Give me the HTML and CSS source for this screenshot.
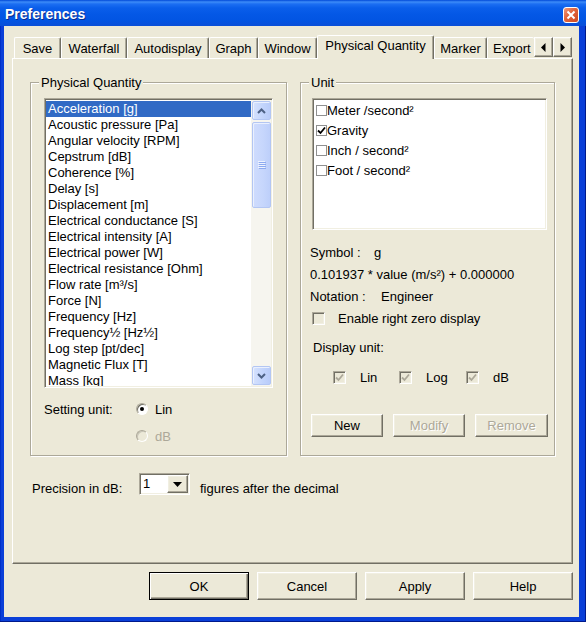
FILE: index.html
```html
<!DOCTYPE html>
<html>
<head>
<meta charset="utf-8">
<title>Preferences</title>
<link rel="stylesheet" href="styles.css">
</head>
<body>
<div class="window">
  <div class="titlebar">
    <span class="title">Preferences</span>
    <span class="close"><svg width="10" height="10" viewBox="0 0 10 10"><path d="M1.5 1.5L8.5 8.5M8.5 1.5L1.5 8.5" stroke="#fff" stroke-width="2"/></svg></span>
  </div>
  <div class="client">
    <div class="tabrow">
      <div class="tabs">
        <div class="tab">Save</div>
        <div class="tab">Waterfall</div>
        <div class="tab">Autodisplay</div>
        <div class="tab">Graph</div>
        <div class="tab">Window</div>
        <div class="tab active">Physical Quantity</div>
        <div class="tab">Marker</div>
        <div class="tab">Export</div>
      </div>
      <div class="tab-scroll">
        <span class="cbtn arrow-btn"><svg width="5" height="9" viewBox="0 0 5 9"><polygon points="4.5,0 0,4.5 4.5,9" fill="#000"/></svg></span>
        <span class="cbtn arrow-btn"><svg width="5" height="9" viewBox="0 0 5 9"><polygon points="0.5,0 5,4.5 0.5,9" fill="#000"/></svg></span>
      </div>
    </div>
    <div class="panel">
      <div class="groups">
        <fieldset class="group group-pq">
          <legend>Physical Quantity</legend>
          <div class="listbox">
            <ul class="items">
              <li class="sel">Acceleration [g]</li>
              <li>Acoustic pressure [Pa]</li>
              <li>Angular velocity [RPM]</li>
              <li>Cepstrum [dB]</li>
              <li>Coherence [%]</li>
              <li>Delay [s]</li>
              <li>Displacement [m]</li>
              <li>Electrical conductance [S]</li>
              <li>Electrical intensity [A]</li>
              <li>Electrical power [W]</li>
              <li>Electrical resistance [Ohm]</li>
              <li>Flow rate [m³/s]</li>
              <li>Force [N]</li>
              <li>Frequency [Hz]</li>
              <li>Frequency½ [Hz½]</li>
              <li>Log step [pt/dec]</li>
              <li>Magnetic Flux [T]</li>
              <li>Mass [kg]</li>
            </ul>
            <div class="vscroll">
              <span class="sb-btn"><svg width="9" height="6" viewBox="0 0 9 6"><path d="M1 5L4.5 1.5L8 5" fill="none" stroke="#4D6185" stroke-width="2"/></svg></span>
              <span class="sb-thumb"><svg width="8" height="8" viewBox="0 0 8 8"><path d="M0 0.5H7M0 2.5H7M0 4.5H7M0 6.5H7" stroke="#EEF3FE" stroke-width="1"/><path d="M1 1.5H8M1 3.5H8M1 5.5H8M1 7.5H8" stroke="#8DAAF0" stroke-width="1"/></svg></span>
              <span class="sb-fill"></span>
              <span class="sb-btn"><svg width="9" height="6" viewBox="0 0 9 6"><path d="M1 1L4.5 4.5L8 1" fill="none" stroke="#4D6185" stroke-width="2"/></svg></span>
            </div>
          </div>
          <div class="setting">
            <span class="setting-label">Setting unit:</span>
            <span class="radio checked"></span>
            <span>Lin</span>
            <span></span>
            <span class="radio disabled"></span>
            <span class="dis">dB</span>
          </div>
        </fieldset>
        <fieldset class="group group-unit">
          <legend>Unit</legend>
          <div class="checklist">
            <div class="ck-item"><span class="flatcb"></span>Meter /second²</div>
            <div class="ck-item"><span class="flatcb"><svg width="9" height="9" viewBox="0 0 9 9"><path d="M1 4.5L3.5 7L8 1.5" fill="none" stroke="#000" stroke-width="1.8"/></svg></span>Gravity</div>
            <div class="ck-item"><span class="flatcb"></span>Inch / second²</div>
            <div class="ck-item"><span class="flatcb"></span>Foot / second²</div>
          </div>
          <div class="info">
            <div><span class="lbl-symbol">Symbol :</span>g</div>
            <div>0.101937 * value (m/s²) + 0.000000</div>
            <div><span class="lbl-notation">Notation :</span>Engineer</div>
          </div>
          <div class="enable-row"><span class="cb"></span>Enable right zero display</div>
          <div class="du-label">Display unit:</div>
          <div class="du-row">
            <span class="du-item"><span class="cb disabled"><svg width="9" height="9" viewBox="0 0 9 9"><path d="M1 4.5L3.5 7L8 1.5" fill="none" stroke="#ACA899" stroke-width="1.8"/></svg></span>Lin</span>
            <span class="du-item"><span class="cb disabled"><svg width="9" height="9" viewBox="0 0 9 9"><path d="M1 4.5L3.5 7L8 1.5" fill="none" stroke="#ACA899" stroke-width="1.8"/></svg></span>Log</span>
            <span class="du-item"><span class="cb disabled"><svg width="9" height="9" viewBox="0 0 9 9"><path d="M1 4.5L3.5 7L8 1.5" fill="none" stroke="#ACA899" stroke-width="1.8"/></svg></span>dB</span>
          </div>
          <div class="unit-buttons">
            <span class="cbtn btn-new">New</span>
            <span class="cbtn btn-dis btn-modify">Modify</span>
            <span class="cbtn btn-dis btn-remove">Remove</span>
          </div>
        </fieldset>
      </div>
      <div class="precision">
        <span class="prec-label">Precision in dB:</span>
        <span class="combo"><span class="combo-val">1</span><span class="cbtn combo-btn"><svg width="9" height="5" viewBox="0 0 9 5"><polygon points="0,0 9,0 4.5,5" fill="#000"/></svg></span></span>
        <span class="prec-after">figures after the decimal</span>
      </div>
    </div>
    <div class="dlg-buttons">
      <span class="cbtn dlg-btn default">OK</span>
      <span class="cbtn dlg-btn">Cancel</span>
      <span class="cbtn dlg-btn">Apply</span>
      <span class="cbtn dlg-btn">Help</span>
    </div>
  </div>
</div>
</body>
</html>
```

FILE: styles.css
```css
* { box-sizing: border-box; }
html, body { margin: 0; padding: 0; }
body {
  width: 586px;
  height: 622px;
  overflow: hidden;
  font-family: "Liberation Sans", Arial, sans-serif;
  font-size: 13px;
  color: #000;
  background: #ECE9D8;
}

.window {
  width: 586px;
  height: 622px;
  display: flex;
  flex-direction: column;
  background: #0A3FD8;
  box-shadow: inset 0 -1px 0 #001A8C, inset -1px 0 0 #001A8C, inset 1px 0 0 #0030C8;
}

.titlebar {
  height: 26px;
  flex: none;
  display: flex;
  align-items: center;
  justify-content: space-between;
  padding: 0 7px 0 5px;
  background: linear-gradient(to bottom, #0049D8 0px, #3D8CF8 2px, #1C6EF2 4px, #0A5EEA 8px, #0458E6 14px, #0255E3 20px, #0A4FD8 26px);
}
.title {
  color: #fff;
  font-weight: bold;
  font-size: 14px;
  text-shadow: 1px 1px 0 #0C2E8A;
  padding-top: 1px;
}
.close {
  width: 16px;
  height: 16px;
  margin-top: 4px;
  border: 1px solid #fff;
  border-radius: 3px;
  background: linear-gradient(135deg, #F09A7C 0%, #E2673F 40%, #CF4A22 100%);
  display: flex;
  align-items: center;
  justify-content: center;
}

.client {
  flex: 1;
  margin: 0 7px 5px 4px;
  background: #ECE9D8;
  display: flex;
  flex-direction: column;
  padding: 9px 6px 0 8px;
}

/* Tabs */
.tabrow {
  height: 23px;
  flex: none;
  display: flex;
  align-items: flex-end;
  padding-left: 2px;
  position: relative;
  z-index: 2;
}
.tabs {
  display: flex;
  align-items: flex-end;
  width: 520px;
  height: 23px;
}
.tab {
  height: 21px;
  background: #ECE9D8;
  border-top: 1px solid #fff;
  border-left: 1px solid #fff;
  border-right: 1px solid #716F64;
  box-shadow: inset -1px 0 0 #ACA899;
  border-radius: 2px 2px 0 0;
  padding-top: 3px;
  line-height: 16px;
  text-align: center;
  white-space: nowrap;
  overflow: hidden;
}
.tab:nth-child(1) { width: 47px; }
.tab:nth-child(2) { width: 66px; }
.tab:nth-child(3) { width: 82px; }
.tab:nth-child(4) { width: 49px; }
.tab:nth-child(5) { width: 59px; }
.tab:nth-child(6) { width: 117px; }
.tab:nth-child(7) { width: 53px; }
.tab:nth-child(8) { width: 47px; text-align: left; padding-left: 5px; border-right: 0; box-shadow: none; }
.tab.active {
  height: 24px;
  margin-bottom: -1px;
  padding-top: 2px;
}
.tab-scroll {
  display: flex;
  margin-bottom: 1px;
}

.cbtn {
  display: flex;
  align-items: center;
  justify-content: center;
  background: #ECE9D8;
  border: 1px solid;
  border-color: #fff #716F64 #716F64 #fff;
  box-shadow: inset -1px -1px 0 #ACA899, inset 1px 1px 0 #F1EFE2;
}
.arrow-btn {
  width: 19px;
  height: 20px;
}

/* Panel */
.panel {
  height: 506px;
  flex: none;
  border: 1px solid;
  border-color: #fff #716F64 #716F64 #fff;
  box-shadow: inset -1px -1px 0 #ACA899;
  padding: 16px 0 0 17px;
}
.groups {
  display: flex;
  gap: 13px;
}
.group {
  margin: 0;
  padding: 0 0 0 8px;
  min-width: 0;
  height: 381px;
  border: 1px solid #ACA899;
  box-shadow: 1px 1px 0 #fff, inset 1px 1px 0 #fff;
}
.group-pq { width: 257px; }
.group-unit { width: 255px; }
.group legend {
  padding: 0 2px;
  line-height: 15px;
  background: #ECE9D8;
}

/* Listbox */
.listbox {
  margin: 8px 0 0 5px;
  width: 229px;
  height: 290px;
  display: flex;
  background: #fff;
  border: 1px solid;
  border-color: #ACA899 #fff #fff #ACA899;
  box-shadow: inset 1px 1px 0 #716F64, inset -1px -1px 0 #F1EFE2;
  padding: 1px;
}
.items {
  width: 205px;
  margin: 0;
  padding: 1px 0 0 0;
  list-style: none;
  overflow: hidden;
}
.items li {
  height: 16px;
  line-height: 16px;
  padding-left: 2px;
  white-space: nowrap;
}
.items li.sel {
  background: #316AC5;
  color: #fff;
}
.vscroll {
  width: 20px;
  display: flex;
  flex-direction: column;
  background: #F6F5EF;
  padding: 1px 0 1px 1px;
}
.sb-btn, .sb-thumb {
  flex: none;
  width: 19px;
  display: flex;
  align-items: center;
  justify-content: center;
  border: 1px solid #B3C6F3;
  border-radius: 2px;
  background: linear-gradient(to right, #D6E2FD, #C2D4FC 60%, #B9CCF9);
  box-shadow: inset 1px 1px 0 #EAF0FE;
}
.sb-btn { height: 19px; }
.sb-thumb {
  height: 86px;
  margin-top: 2px;
  background: linear-gradient(to right, #CFDCFD, #C6D6FC 60%, #BDCFFA);
}
.sb-fill { flex: 1; }

/* Setting unit radios */
.setting {
  margin: 13px 0 0 5px;
  display: grid;
  grid-template-columns: 92px 19px auto;
  grid-auto-rows: 16px;
  row-gap: 11px;
  align-items: center;
}
.radio {
  width: 12px;
  height: 12px;
  border-radius: 50%;
  border: 1px solid;
  border-color: #ACA899 #fff #fff #ACA899;
  box-shadow: inset 1px 1px 0 #716F64;
  background: #fff;
  display: flex;
  align-items: center;
  justify-content: center;
}
.radio.checked::after {
  content: "";
  width: 4px;
  height: 4px;
  border-radius: 50%;
  background: #000;
}
.radio.disabled {
  background: #ECE9D8;
  box-shadow: inset 1px 1px 0 #C9C6B8;
}
.dis { color: #ACA899; }

/* Unit group */
.checklist {
  margin: 8px 0 0 3px;
  width: 235px;
  height: 132px;
  background: #fff;
  border: 1px solid;
  border-color: #ACA899 #fff #fff #ACA899;
  box-shadow: inset 1px 1px 0 #716F64, inset -1px -1px 0 #F1EFE2;
  padding: 1px;
}
.ck-item {
  height: 20px;
  display: flex;
  align-items: center;
  white-space: nowrap;
}
.flatcb {
  width: 11px;
  height: 11px;
  margin-left: 2px;
  border: 1px solid #8F9090;
  background: #fff;
  display: flex;
  align-items: center;
  justify-content: center;
}
.info {
  margin: 12px 0 0 1px;
  line-height: 22px;
}
.lbl-symbol { display: inline-block; width: 64px; }
.lbl-notation { display: inline-block; width: 71px; }

.cb {
  width: 13px;
  height: 13px;
  flex: none;
  border: 1px solid;
  border-color: #ACA899 #fff #fff #ACA899;
  box-shadow: inset 1px 1px 0 #716F64, inset -1px -1px 0 #F1EFE2;
  background: #ECE9D8;
  display: flex;
  align-items: center;
  justify-content: center;
}
.enable-row {
  height: 20px;
  display: flex;
  align-items: center;
  margin-left: 3px;
}
.enable-row .cb { margin-right: 13px; }
.du-label {
  margin: 12px 0 0 4px;
  line-height: 16px;
}
.du-row {
  margin: 11px 0 0 24px;
  height: 20px;
  display: flex;
  align-items: center;
}
.du-item {
  display: flex;
  align-items: center;
}
.du-item:nth-child(1) { width: 66px; }
.du-item:nth-child(2) { width: 67px; }
.du-item .cb { margin-right: 14px; }
.unit-buttons {
  margin: 27px 0 0 2px;
  display: flex;
  gap: 10px;
}
.unit-buttons .cbtn {
  width: 72px;
  height: 23px;
}
.unit-buttons .btn-remove { width: 73px; }
.btn-dis {
  color: #ACA899;
  text-shadow: 1px 1px 0 #fff;
}

/* Precision */
.precision {
  margin: 17px 0 0 2px;
  height: 22px;
  display: flex;
  align-items: flex-start;
}
.prec-label {
  width: 107px;
  margin-top: 8px;
  line-height: 16px;
}
.combo {
  width: 51px;
  height: 22px;
  display: flex;
  background: #fff;
  border: 1px solid;
  border-color: #ACA899 #fff #fff #ACA899;
  box-shadow: inset 1px 1px 0 #716F64, inset -1px -1px 0 #F1EFE2;
  padding: 1px;
}
.combo-val {
  flex: 1;
  padding: 1px 0 0 2px;
  line-height: 16px;
}
.combo-btn {
  width: 21px;
  height: 18px;
}
.prec-after {
  margin: 8px 0 0 10px;
  line-height: 16px;
}

/* Dialog buttons */
.dlg-buttons {
  margin-top: 8px;
  display: flex;
  justify-content: flex-end;
  gap: 8px;
}
.dlg-btn {
  width: 100px;
  height: 28px;
}
.dlg-btn.default {
  border-color: #000;
  box-shadow: inset 1px 1px 0 #fff, inset -1px -1px 0 #716F64, inset -2px -2px 0 #ACA899;
}
```
